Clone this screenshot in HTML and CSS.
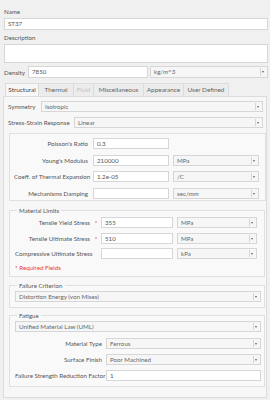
FILE: index.html
```html
<!DOCTYPE html>
<html lang="en">
<head>
    <meta charset="UTF-8">
    <meta name="viewport" content="width=device-width, initial-scale=1.0">
    <title>Material - ST37</title>
    <link rel="stylesheet" href="styles.css">
</head>
<body>
    <div class="top">
        <div class="cap first">Name</div>
        <div class="inp">ST37</div>
        <div class="cap">Description</div>
        <div class="inp area"></div>
        <div class="density">
            <span class="lbl">Density</span>
            <div class="inp">7850</div>
            <div class="sel">kg/m^3<i></i></div>
        </div>
    </div>

    <div class="tabs">
        <div class="tab active w34">Structural</div>
        <div class="tab w35">Thermal</div>
        <div class="tab off w20">Fluid</div>
        <div class="tab w50">Miscellaneous</div>
        <div class="tab w40">Appearance</div>
        <div class="tab w45">User Defined</div>
    </div>

    <div class="panel">
        <div class="line sym">
            <span class="lbl">Symmetry</span>
            <div class="sel">Isotropic<i></i></div>
        </div>
        <div class="line ssr">
            <span class="lbl">Stress-Strain Response</span>
            <div class="sel">Linear<i></i></div>
        </div>

        <div class="box props">
            <span class="lbl">Poisson's Ratio</span>
            <div class="inp">0.3</div>
            <span></span>
            <span class="lbl">Young's Modulus</span>
            <div class="inp">210000</div>
            <div class="sel">MPa<i></i></div>
            <span class="lbl">Coeff. of Thermal Expansion</span>
            <div class="inp">1.2e-05</div>
            <div class="sel">/C<i></i></div>
            <span class="lbl">Mechanisms Damping</span>
            <div class="inp"></div>
            <div class="sel">sec/mm<i></i></div>
        </div>

        <fieldset class="limits">
            <legend>Material Limits</legend>
            <div class="grid">
                <span class="lbl">Tensile Yield Stress</span>
                <span class="req">*</span>
                <div class="inp">355</div>
                <div class="sel">MPa<i></i></div>
                <span class="lbl">Tensile Ultimate Stress</span>
                <span class="req">*</span>
                <div class="inp">510</div>
                <div class="sel">MPa<i></i></div>
                <span class="lbl">Compressive Ultimate Stress</span>
                <span></span>
                <div class="inp"></div>
                <div class="sel">kPa<i></i></div>
            </div>
            <div class="note">* Required Fields</div>
        </fieldset>

        <fieldset class="crit">
            <legend>Failure Criterion</legend>
            <div class="sel">Distortion Energy (von Mises)<i></i></div>
        </fieldset>

        <fieldset class="fatigue">
            <legend>Fatigue</legend>
            <div class="sel">Unified Material Law (UML)<i></i></div>
            <div class="grid">
                <span class="lbl">Material Type</span>
                <div class="sel">Ferrous<i></i></div>
                <span class="lbl">Surface Finish</span>
                <div class="sel">Poor Machined<i></i></div>
                <span class="lbl">Failure Strength Reduction Factor</span>
                <div class="inp">1</div>
            </div>
        </fieldset>
    </div>
</body>
</html>
```

FILE: styles.css
```css
body {
    margin: 0;
    width: 270px;
    height: 400px;
    overflow: hidden;
    background: #f0f0f0;
    font-family: Lato, "Noto Sans", sans-serif;
    font-size: 6.2px;
    color: #555;
}
.inp, .sel {
    box-sizing: border-box;
    height: 11px;
    line-height: 9px;
    padding-left: 3px;
    border: 1px solid #d6d6d6;
    background: #fff;
    white-space: nowrap;
    overflow: hidden;
}
.sel {
    position: relative;
    background: #f6f6f6;
    color: #666;
}
.sel i {
    position: absolute;
    top: 1px;
    right: 1px;
    bottom: 1px;
    width: 5px;
    border-left: 1px solid #d6d6d6;
}
.sel i::after {
    content: "";
    position: absolute;
    top: 3px;
    left: 1px;
    border-left: 1.5px solid transparent;
    border-right: 1.5px solid transparent;
    border-top: 2px solid #666;
}
.lbl {
    white-space: nowrap;
}

/* header fields */
.top {
    padding: 0 2px 0 4px;
}
.cap {
    height: 8px;
    line-height: 8px;
    margin-top: 4px;
    margin-bottom: 2px;
}
.cap.first {
    margin-top: 8px;
}
.top .inp {
    height: 12px;
    line-height: 10px;
}
.top .area {
    height: 19px;
}
.density {
    display: flex;
    align-items: center;
    margin-top: 3px;
}
.density .lbl {
    width: 24px;
}
.density .inp {
    width: 120px;
    margin-right: 2px;
}
.density .sel {
    flex: 1;
    height: 12px;
    line-height: 10px;
}

/* tabs */
.tabs {
    display: flex;
    margin: 5px 0 0 5px;
    height: 13px;
}
.tab {
    box-sizing: border-box;
    height: 13px;
    line-height: 12px;
    text-align: center;
    white-space: nowrap;
    font-size: 6.4px;
    border: 1px solid #dcdcdc;
    border-left: none;
    border-bottom: none;
    background: #ececec;
    color: #666;
}
.tab:first-child {
    border-left: 1px solid #dcdcdc;
}
.tab.active {
    background: #f7f7f7;
    color: #444;
}
.tab.off {
    color: #c4c4c4;
}
.w34 { width: 34px; }
.w35 { width: 35px; }
.w20 { width: 20px; }
.w50 { width: 50px; }
.w40 { width: 40px; }
.w45 { width: 45px; }

/* main panel */
.panel {
    box-sizing: border-box;
    width: 264px;
    height: 302px;
    margin-left: 3px;
    padding: 4px 1px 0 4px;
    border: 1px solid #dcdcdc;
    background: #f7f7f7;
}
.line {
    display: flex;
    align-items: center;
}
.line .sel {
    flex: 1;
    margin-right: 2px;
}
.sym .lbl {
    width: 33px;
}
.ssr {
    margin-top: 5px;
}
.ssr .lbl {
    width: 66px;
}

.box, fieldset {
    box-sizing: border-box;
    border: 1px solid #e0e0e0;
    background: #f9f9f9;
}
.props {
    display: grid;
    grid-template-columns: 75px 76px 86px;
    column-gap: 4px;
    row-gap: 4px;
    align-items: center;
    width: 257px;
    height: 68px;
    margin: 5px 0 0 1px;
    padding: 3px 5px 0 4px;
}
.props .lbl, .grid .lbl {
    text-align: right;
    padding-right: 1px;
}

fieldset {
    margin: 5px 0 0 1px;
    padding: 0 3px 0 5px;
    width: 256px;
}
legend {
    padding: 0 2px;
    margin-left: 2px;
    height: 9px;
    line-height: 9px;
}
.limits .grid {
    display: grid;
    grid-template-columns: 76px 10px 72px 84px;
    column-gap: 0;
    row-gap: 4.5px;
    align-items: center;
    margin-top: 2px;
}
.limits .grid .sel {
    margin-left: 4px;
}
.req {
    color: #e53935;
    text-align: center;
}
.note {
    color: #e53935;
    height: 9px;
    line-height: 9px;
    margin: 4px 0 4px 0;
}
.crit {
    margin-top: 4px;
    padding-bottom: 5px;
}
.crit .sel {
    margin-top: 1px;
}
.fatigue {
    margin-top: 3px;
    padding-bottom: 5px;
}
.fatigue > .sel {
    margin-top: 1px;
}
.fatigue .grid {
    display: grid;
    grid-template-columns: 88px 155px;
    column-gap: 3px;
    row-gap: 5px;
    align-items: center;
    margin-top: 6px;
}
```
